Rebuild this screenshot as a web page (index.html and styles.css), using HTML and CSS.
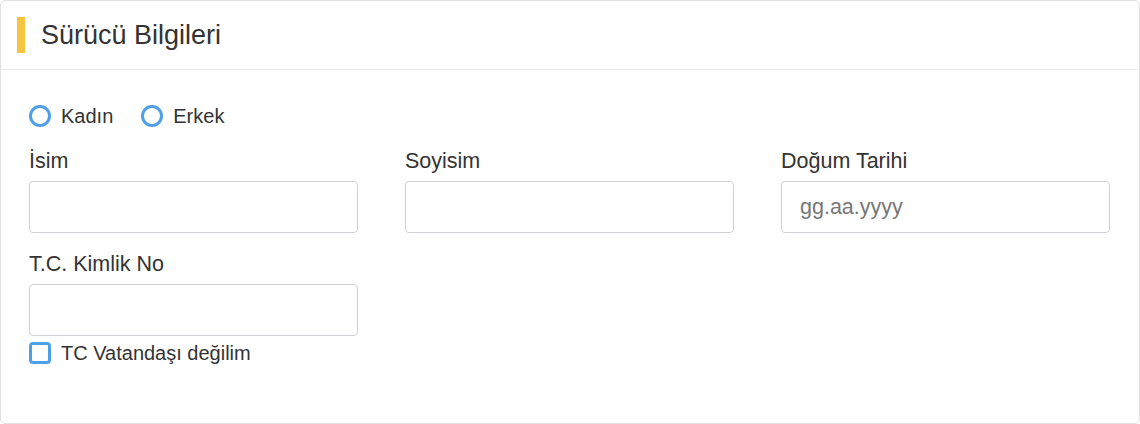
FILE: index.html
```html
<!DOCTYPE html>
<html lang="tr">
<head>
    <meta charset="UTF-8">
    <meta name="viewport" content="width=device-width, initial-scale=1.0">
    <title>Sürücü Bilgileri</title>
    <link rel="stylesheet" href="styles.css">
</head>
<body>
    <div class="card">
        <div class="card-header">
            <span class="accent"></span>
            <h2>Sürücü Bilgileri</h2>
        </div>

        <form class="card-body">
            <div class="gender">
                <label class="choice"><input type="radio" name="gender"> Kadın</label>
                <label class="choice"><input type="radio" name="gender"> Erkek</label>
            </div>

            <div class="fields">
                <div class="field">
                    <label for="name">İsim</label>
                    <input type="text" id="name">
                </div>
                <div class="field">
                    <label for="surname">Soyisim</label>
                    <input type="text" id="surname">
                </div>
                <div class="field">
                    <label for="birth">Doğum Tarihi</label>
                    <input type="text" id="birth" placeholder="gg.aa.yyyy">
                </div>
                <div class="field">
                    <label for="tc">T.C. Kimlik No</label>
                    <input type="text" id="tc">
                    <label class="choice check"><input type="checkbox"> TC Vatandaşı değilim</label>
                </div>
            </div>
        </form>
    </div>
</body>
</html>
```

FILE: styles.css
```css
*{
    margin: 0;
    padding: 0;
    box-sizing: border-box;
    font-family: "Liberation Sans", Arial, sans-serif;
}
body{
    background: #fff;
    color: #333;
}
.card{
    width: 1140px;
    height: 424px;
    border: 1px solid #e1e1e1;
    border-radius: 5px;
    background: #fff;
}
.card-header{
    height: 69px;
    display: flex;
    align-items: center;
    padding-left: 16px;
    border-bottom: 1px solid #ececec;
}
.accent{
    width: 8px;
    height: 36px;
    background: #f6c540;
    margin-right: 16px;
}
.card-header h2{
    font-size: 27px;
    font-weight: 400;
    color: #333;
}
.card-body{
    padding: 35px 29px 0 28px;
}
.gender{
    display: flex;
    gap: 28px;
}
.choice{
    display: flex;
    align-items: center;
    gap: 10px;
    font-size: 20px;
    line-height: 22px;
    color: #333;
}
.choice input{
    appearance: none;
    width: 22px;
    height: 22px;
    border: 3px solid #4d9fe7;
    border-radius: 50%;
    margin: 0;
}
.choice input[type="checkbox"]{
    border-radius: 4px;
}
.fields{
    display: grid;
    grid-template-columns: repeat(3, 329px);
    column-gap: 47px;
    row-gap: 19px;
    margin-top: 22px;
}
.field label{
    display: block;
    font-size: 21.5px;
    line-height: 24px;
    margin-bottom: 8px;
}
.field input[type="text"]{
    width: 329px;
    height: 52px;
    border: 1px solid #cfd3d8;
    border-radius: 4px;
    padding: 0 18px;
    font-size: 21.5px;
    color: #333;
    outline: none;
}
.field input::placeholder{
    color: #777;
}
.field .check{
    display: flex;
    margin: 6px 0 0;
    font-size: 20px;
    line-height: 22px;
}
```
